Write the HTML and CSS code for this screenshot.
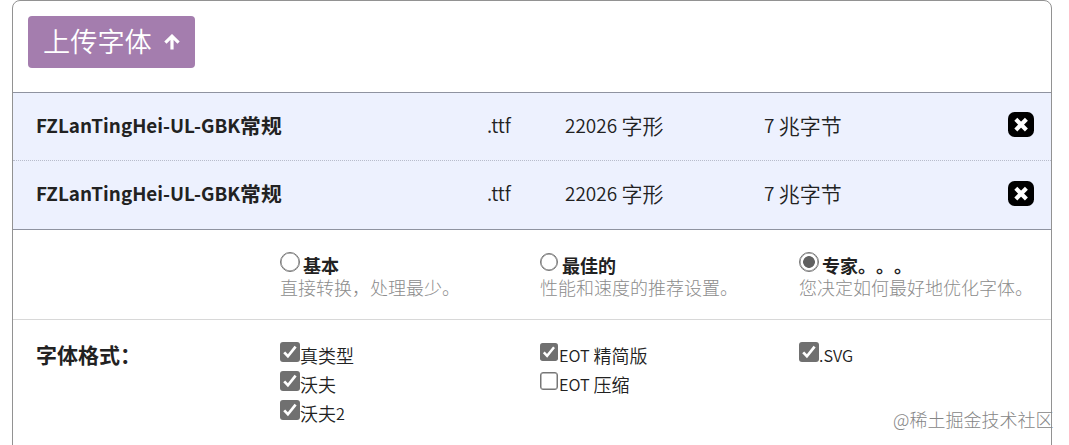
FILE: index.html
```html
<!DOCTYPE html>
<html lang="zh-CN">
<head>
<meta charset="utf-8">
<title>字体生成器</title>
<link rel="stylesheet" href="styles.css">
</head>
<body>
<main class="panel">
  <header class="upload">
    <button class="upload-button" type="button"><span>上传字体</span>
      <svg class="arrow" viewBox="0 0 16 16"><path d="M8 15.500V3M1.400 8.700 8 2.200l6.600 6.500"/></svg>
    </button>
  </header>
  <section class="fonts">
    <div class="font-row">
      <strong><span class="latin">FZLanTingHei-UL-GBK</span>常规</strong><span><span class="latin">.ttf</span></span><span><span class="latin">22026 </span>字形</span><span><span class="latin">7 </span>兆字节</span>
      <svg class="remove" viewBox="0 0 26 25"><rect width="26" height="25" rx="6.500"/><path d="m7.800 7.300 10.600 10.600m0-10.600L7.800 17.900"/></svg>
    </div>
    <div class="font-row">
      <strong><span class="latin">FZLanTingHei-UL-GBK</span>常规</strong><span><span class="latin">.ttf</span></span><span><span class="latin">22026 </span>字形</span><span><span class="latin">7 </span>兆字节</span>
      <svg class="remove" viewBox="0 0 26 25"><rect width="26" height="25" rx="6.500"/><path d="m7.800 7.300 10.600 10.600m0-10.600L7.800 17.900"/></svg>
    </div>
  </section>
  <section class="grid modes">
    <div></div>
    <div><label class="mode"><span class="radio"></span><b>基本</b></label><p>直接转换，处理最少。</p></div>
    <div><label class="mode"><span class="radio small"></span><b>最佳的</b></label><p>性能和速度的推荐设置。</p></div>
    <div><label class="mode"><span class="radio selected"></span><b>专家。。。</b></label><p>您决定如何最好地优化字体。</p></div>
  </section>
  <section class="grid formats">
    <h2>字体格式：</h2>
    <div>
      <label class="format"><svg class="check" viewBox="0 0 20 20"><rect width="20" height="20" rx="3"/><path d="m4.200 10.400 3.700 3.900 7.700-9.600"/></svg><span>真类型</span></label>
      <label class="format"><svg class="check" viewBox="0 0 20 20"><rect width="20" height="20" rx="3"/><path d="m4.200 10.400 3.700 3.900 7.700-9.600"/></svg><span>沃夫</span></label>
      <label class="format"><svg class="check" viewBox="0 0 20 20"><rect width="20" height="20" rx="3"/><path d="m4.200 10.400 3.700 3.900 7.700-9.600"/></svg><span>沃夫<span class="latin">2</span></span></label>
    </div>
    <div>
      <label class="format"><svg class="check small" viewBox="0 0 20 20"><rect width="20" height="20" rx="3"/><path d="m4.200 10.400 3.700 3.900 7.700-9.600"/></svg><span><span class="latin">EOT </span>精简版</span></label>
      <label class="format"><span class="check small empty"></span><span><span class="latin">EOT </span>压缩</span></label>
    </div>
    <div>
      <label class="format"><svg class="check" viewBox="0 0 20 20"><rect width="20" height="20" rx="3"/><path d="m4.200 10.400 3.700 3.900 7.700-9.600"/></svg><span><span class="latin">.SVG</span></span></label>
    </div>
  </section>
</main>
<div class="watermark">@稀土掘金技术社区</div>
</body>
</html>
```
FILE: styles.css
```css
* { box-sizing: border-box; }

body {
  margin: 0;
  height: 445px;
  overflow: hidden;
  background: #fff;
  color: #222;
  font-family: "Noto Sans CJK SC", sans-serif;
  text-spacing-trim: space-all;
}

.latin {
  font-size: 0.905em;
  line-height: 1;
  vertical-align: 1px;
}

.panel {
  width: 1040px;
  height: 465px;
  margin-left: 12px;
  border: 1px solid #929292;
  border-radius: 8px;
}

.upload {
  height: 91px;
  padding: 15px;
}

.upload-button {
  display: flex;
  align-items: center;
  gap: 12px;
  width: 167px;
  height: 52px;
  padding: 0 0 0 15px;
  border: 0;
  border-radius: 4px;
  background: #a47dae;
  color: #fff;
  font: 350 27.2px/48px "Noto Sans CJK SC", sans-serif;
}

.upload-button span { height: 52px; }

.arrow {
  width: 16px;
  height: 16px;
  fill: none;
  stroke: #fff;
  stroke-width: 3.2;
}

.fonts {
  border-top: 1px solid #8f93a0;
  border-bottom: 1px solid #8f93a0;
  background: #edf1fe;
}

.font-row {
  display: grid;
  grid-template-columns: 451px 78px 199px 244px 26px;
  align-items: center;
  height: 68px;
  padding-left: 23px;
  padding-bottom: 4px;
  font-size: 21px;
  font-weight: 350;
  line-height: 30px;
}

.font-row strong { font-size: 20.8px; }

.font-row:first-child { border-bottom: 1px dotted #b8bccb; }

.remove {
  width: 26px;
  height: 25px;
}

.remove path {
  stroke: #fff;
  stroke-width: 4.2;
}

.grid {
  display: grid;
  grid-template-columns: 244px 260px 259px 1fr;
  padding-left: 23px;
}

.modes {
  height: 90px;
  padding-top: 22px;
  border-bottom: 1px solid #d8d8d8;
}

.mode {
  display: flex;
  gap: 3px;
  height: 24px;
  font-size: 18px;
  line-height: 27px;
}

.radio {
  flex: none;
  width: 20px;
  height: 20px;
  border: 1.400px solid #767676;
  border-radius: 50%;
  box-shadow: inset 0 0 0 0.500px #767676;
}

.radio.small {
  width: 18px;
  height: 18px;
  margin: 1px 1px 0 0;
}

.selected {
  background: radial-gradient(circle, #606060 5.500px, #fff 6.200px);
}

.modes p {
  margin: 0;
  color: #8c8c8c;
  font-size: 18px;
  font-weight: 300;
  line-height: 22px;
  white-space: nowrap;
}

.formats { padding-top: 22px; }

.formats h2 {
  margin: 0;
  font-size: 21px;
  line-height: 24px;
}

.format {
  display: flex;
  height: 29px;
  font-size: 18px;
  font-weight: 350;
  line-height: 27px;
}

.check {
  flex: none;
  width: 20px;
  height: 20px;
}

.check rect { fill: #707070; }

.check path {
  fill: none;
  stroke: #fff;
  stroke-width: 2.7;
}

.check.small {
  width: 18px;
  height: 18px;
  margin: 1px 1px 0 0;
}

.empty {
  border: 1px solid #767676;
  border-radius: 3px;
  box-shadow: inset 0 0 0 0.500px #767676;
}

.watermark {
  position: absolute;
  left: 893px;
  top: 406px;
  color: #858585;
  font-size: 18px;
  font-weight: 300;
  line-height: 27px;
  white-space: nowrap;
}
```
